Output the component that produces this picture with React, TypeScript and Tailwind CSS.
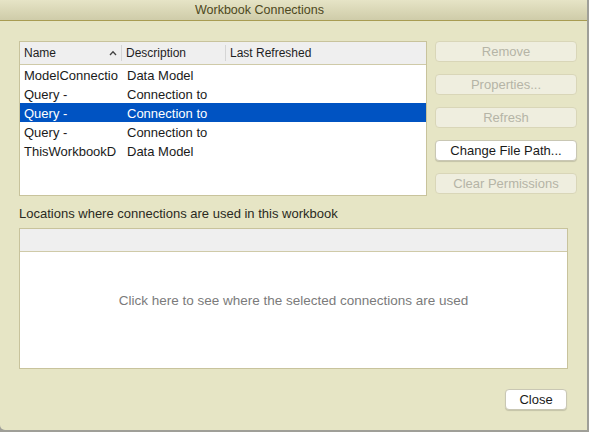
const rows = [
  { name: 'ModelConnectio', desc: 'Data Model', selected: false },
  { name: 'Query -', desc: 'Connection to', selected: false },
  { name: 'Query -', desc: 'Connection to', selected: true },
  { name: 'Query -', desc: 'Connection to', selected: false },
  { name: 'ThisWorkbookD', desc: 'Data Model', selected: false },
]

const buttons = [
  { label: 'Remove', enabled: false },
  { label: 'Properties...', enabled: false },
  { label: 'Refresh', enabled: false },
  { label: 'Change File Path...', enabled: true },
  { label: 'Clear Permissions', enabled: false },
]

function DialogButton({ label, enabled }: { label: string; enabled: boolean }) {
  return (
    <div
      className={
        enabled
          ? 'h-[21px] w-[142px] flex items-center justify-center rounded-[4px] bg-white border border-[#c9c7b4] shadow-[0_1px_1px_rgba(0,0,0,0.15)] text-[13px] text-[#1a1a1a]'
          : 'h-[21px] w-[142px] flex items-center justify-center rounded-[4px] bg-[#efeedf] border border-[#d9d6b8] text-[13px] text-[#b5b4a6]'
      }
    >
      {label}
    </div>
  )
}

export default function App() {
  return (
    <div className="w-[589px] h-[432px] bg-[#9f9f98] font-['Liberation_Sans',Arial,sans-serif]">
      <div className="w-[587px] h-[430px] bg-[#e6e5c5] rounded-bl-[5px] flex flex-col overflow-hidden">
        {/* Title bar */}
        <div className="h-[21px] shrink-0 flex items-center justify-center pr-[68px] bg-gradient-to-b from-[#e6e4c6] to-[#cfcca9] border-b border-[#a89c52] text-[12.5px] text-[#4d4820]">
          Workbook Connections
        </div>

        <div className="flex flex-col pl-[19px] pt-[20px]">
          <div className="flex gap-[8px]">
            {/* Connections table */}
            <div className="w-[408px] h-[155px] shrink-0 bg-white border border-[#c8c39c] flex flex-col">
              <div className="h-[23px] flex items-center bg-[#efefef] border-b border-[#cfcaa8] text-[12px] text-[#1e1e1e]">
                <div className="w-[102px] flex items-center justify-between pl-[4px] pr-[4px] border-r border-[#d5d5d5] h-[16px]">
                  <span>Name</span>
                  <svg width="8" height="6" viewBox="0 0 8 6">
                    <path d="M1 5 L4 1.8 L7 5" fill="none" stroke="#444" strokeWidth="1.3" />
                  </svg>
                </div>
                <div className="w-[104px] pl-[4px] border-r border-[#d5d5d5] h-[16px] flex items-center">
                  Description
                </div>
                <div className="pl-[4px] h-[16px] flex items-center">Last Refreshed</div>
              </div>
              {rows.map((r, i) => (
                <div
                  key={i}
                  className={
                    r.selected
                      ? 'h-[19px] pt-[2px] flex items-center bg-[#0053c2] text-white text-[13px]'
                      : 'h-[19px] pt-[2px] flex items-center text-[#1a1a1a] text-[13px]'
                  }
                >
                  <div className="w-[103px] pl-[4px] whitespace-nowrap overflow-hidden">{r.name}</div>
                  <div className="pl-[4px] whitespace-nowrap">{r.desc}</div>
                </div>
              ))}
            </div>

            {/* Buttons */}
            <div className="flex flex-col gap-[12px]">
              {buttons.map((b) => (
                <DialogButton key={b.label} label={b.label} enabled={b.enabled} />
              ))}
            </div>
          </div>

          <div className="mt-[10px] text-[13px] text-[#2a2a22] leading-[16px]">
            Locations where connections are used in this workbook
          </div>

          <div className="mt-[6px] w-[549px] h-[141px] bg-white border border-[#c8c39c] flex flex-col">
            <div className="h-[23px] bg-[#efefef] border-b border-[#cfcaa8]" />
            <div className="flex-1 flex justify-center pt-[39px] text-[13.5px] text-[#7b7b7b]">
              Click here to see where the selected connections are used
            </div>
          </div>

          <div className="flex justify-end mt-[20px] w-[549px] pr-[1px]">
            <div className="h-[21px] w-[62px] flex items-center justify-center rounded-[4px] bg-white border border-[#c9c7b4] shadow-[0_1px_1px_rgba(0,0,0,0.15)] text-[13px] text-[#1a1a1a]">
              Close
            </div>
          </div>
        </div>
      </div>
    </div>
  )
}
